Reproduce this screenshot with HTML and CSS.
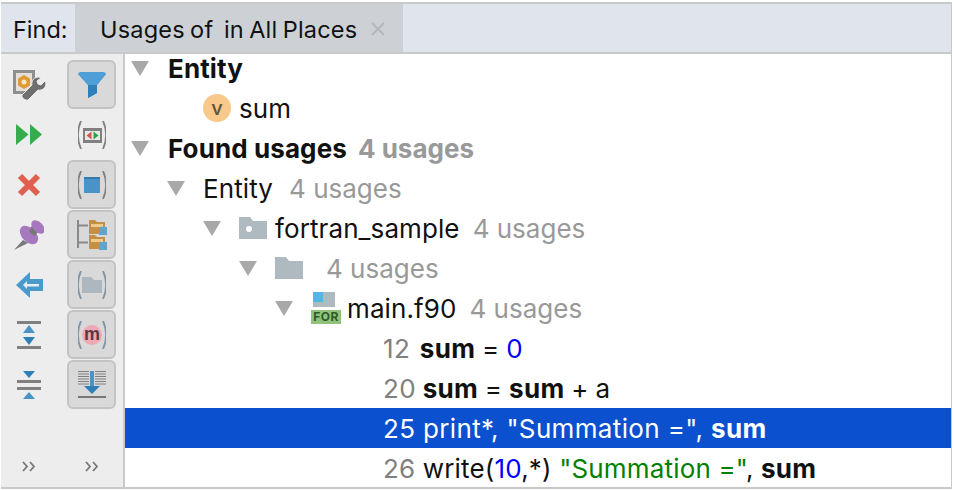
FILE: index.html
```html
<!DOCTYPE html>
<html lang="en">
<head>
<meta charset="utf-8">
<title>Find</title>
<link rel="stylesheet" href="styles.css">
</head>
<body>
<div class="panel">
  <header class="head">
    <div class="find">Find:</div>
    <div class="tab"><span class="title">Usages of&nbsp; in All Places</span>
      <svg class="close" width="14" height="14" viewBox="0 0 14 14"><path d="M1 1l12 12M13 1L1 13" stroke="#b4b8bc" stroke-width="2" fill="none"/></svg>
    </div>
  </header>
  <div class="main">
    <aside class="side">
      <div class="col">
        <div class="cell"><svg width="34" height="31" viewBox="0 0 34 31"><rect x="1" y="1" width="22" height="24" fill="#8f8f8f"/><rect x="4" y="4" width="16" height="18" fill="#e4e0d8"/><path d="M12 6l6 3.500v7L12 20l-6-3.500v-7z" fill="#e09a33"/><circle cx="12" cy="13" r="2.500" fill="#f6e7cc"/><path d="M10 26l10-10c-1-4 2-8 7-8l2 1-4 3 1 3 3 1 4-4 1 2c0 5-4 8-8 7l-10 10c-2 1-7-2-6-5z" fill="#6f6f6f" stroke="#ededed" stroke-width="1"/></svg></div>
        <div class="cell"><svg width="26" height="21" viewBox="0 0 26 21"><path d="M0 0l12.500 10.500L0 21zM14 0l12 10.500L14 21z" fill="#36ac4c"/></svg></div>
        <div class="cell"><svg width="24" height="24" viewBox="0 0 24 24"><path d="M3 3l18 18M21 3L3 21" stroke="#e0604f" stroke-width="6" fill="none"/></svg></div>
        <div class="cell"><svg width="30" height="30" viewBox="0 0 30 30"><path d="M0 30l9-10 5 3z" fill="#777"/><path d="M14 10l5-5 6 6-5 5z" fill="#777"/><ellipse cx="15" cy="15" rx="11" ry="7" fill="#a679bf" transform="rotate(45 15 15)"/><path d="M15 11l4-4 5 5-4 4z" fill="#777"/><ellipse cx="24" cy="7" rx="8" ry="5" fill="#a679bf" transform="rotate(45 24 7)"/></svg></div>
        <div class="cell"><svg width="27" height="26" viewBox="0 0 27 26"><path d="M0 13L14 0v7h13v12H14v7z" fill="#4a9bcb"/><path d="M7 13l4-4v3h12v2.500H11V17z" fill="#e6eef4"/></svg></div>
        <div class="cell"><svg width="24" height="28" viewBox="0 0 24 28"><rect width="24" height="3" fill="#808080"/><path d="M12 4l6 8H6z" fill="#4a93c4"/><path d="M12 24l6-8H6z" fill="#2e7fb5"/><rect y="25" width="24" height="3" fill="#808080"/></svg></div>
        <div class="cell"><svg width="24" height="28" viewBox="0 0 24 28"><path d="M6 0h12l-6 7z" fill="#2e7fb5"/><rect y="9" width="24" height="3" fill="#808080"/><rect y="16" width="24" height="3" fill="#808080"/><path d="M12 21l6 7H6z" fill="#4a93c4"/></svg></div>
        <div class="more">
          <svg width="14" height="11" viewBox="0 0 14 11"><path d="M1 1l4 4.500-4 4.500M8 1l4 4.500-4 4.500" stroke="#777" stroke-width="1.800" fill="none"/></svg>
        </div>
      </div>
      <div class="col col2">
        <div class="cell on"><svg width="28" height="26" viewBox="0 0 28 26"><path d="M0 2l2-2h24l2 2-9 11v8l-9 5V13z" fill="#4a9bd4"/><path d="M0 2l2-2h24l2 2-9 11h-9z" fill="#4f9ed6"/><path d="M10 13h9v8l-9 5z" fill="#2f7fb9"/></svg></div>
        <div class="cell"><svg width="28" height="28" viewBox="0 0 28 28"><path d="M3 0C-1 9-1 19 3 28M25 0c4 9 4 19 0 28" stroke="#808080" stroke-width="1.800" fill="none"/><rect x="5" y="7" width="19" height="15" fill="#808080"/><rect x="7" y="10" width="15" height="9" fill="#e8e8e8"/><path d="M13.500 10.500v8l-5-4z" fill="#d9534a"/><path d="M15.500 10.500v8l5-4z" fill="#27a844"/></svg></div>
        <div class="cell on"><svg width="28" height="28" viewBox="0 0 28 28"><path d="M3 0C-1 9-1 19 3 28M25 0c4 9 4 19 0 28" stroke="#808080" stroke-width="1.800" fill="none"/><rect x="6" y="6" width="16" height="16" fill="#4a93c9"/><rect x="6" y="6" width="16" height="2" fill="#3778a6"/></svg></div>
        <div class="cell on"><svg width="30" height="30" viewBox="0 0 30 30"><path d="M1 0v28M1 5.500h10M1 22.500h10" stroke="#8a8a8a" stroke-width="2" fill="none"/><path d="M12 0h6l2 2h8v12H12z" fill="#c48f46"/><path d="M14 4h12v3H14z" fill="#eccb90"/><path d="M12 15h6l2 2h8v12H12z" fill="#c48f46"/><path d="M14 19h12v3H14z" fill="#eccb90"/><rect x="22" y="7" width="8" height="8" fill="#5ea5cf"/><rect x="22" y="22" width="8" height="8" fill="#5ea5cf"/></svg></div>
        <div class="cell on"><svg width="28" height="28" viewBox="0 0 28 28"><path d="M3 0C-1 9-1 19 3 28M25 0c4 9 4 19 0 28" stroke="#7f93a3" stroke-width="1.800" fill="none"/><path d="M4 6h9l3 3h8v13H4z" fill="#adb7bf"/></svg></div>
        <div class="cell on"><svg width="28" height="28" viewBox="0 0 28 28"><path d="M3 0C-1 9-1 19 3 28M25 0c4 9 4 19 0 28" stroke="#7f93a3" stroke-width="1.800" fill="none"/><circle cx="14" cy="14" r="10" fill="#f0a8b5"/><text x="14" y="18.500" class="m">m</text></svg></div>
        <div class="cell on"><svg width="28" height="27" viewBox="0 0 28 27"><path d="M0 .5h11M0 3h11M0 5.500h11M0 8h11M0 10.500h11M0 13h11M17 .5h11M17 3h11M17 5.500h11M17 8h11M17 10.500h11M17 13h11" stroke="#808080" stroke-width="1.200"/><rect x="12" y="0" width="4" height="15" fill="#4a93c4"/><path d="M6 15h16l-8 8z" fill="#2e7fb5"/><rect y="25" width="28" height="2" fill="#777"/></svg></div>
        <div class="more">
          <svg width="14" height="11" viewBox="0 0 14 11"><path d="M1 1l4 4.500-4 4.500M8 1l4 4.500-4 4.500" stroke="#777" stroke-width="1.800" fill="none"/></svg>
        </div>
      </div>
    </aside>
    <section class="tree">
      <div class="row lv0 b"><i class="tri"></i><span>Entity</span></div>
      <div class="row lv-var"><span class="var">v</span><span>sum</span></div>
      <div class="row lv0 b"><i class="tri"></i><span>Found usages</span><span class="cnt">4 usages</span></div>
      <div class="row lv1"><i class="tri"></i><span>Entity</span><span class="cnt">4 usages</span></div>
      <div class="row lv2"><i class="tri"></i>
        <svg class="ic" width="28" height="22" viewBox="0 0 28 22"><path d="M0 0h11l3 4h14v18H0z" fill="#afb9c0"/><circle cx="10" cy="12" r="3" fill="#fff"/></svg>
        <span>fortran_sample</span><span class="cnt">4 usages</span></div>
      <div class="row lv3"><i class="tri"></i>
        <svg class="ic" width="28" height="22" viewBox="0 0 28 22"><path d="M0 0h11l3 4h14v18H0z" fill="#afb9c0"/></svg>
        <span class="cnt gap">4 usages</span></div>
      <div class="row lv4"><i class="tri"></i>
        <svg class="file" width="30" height="32" viewBox="0 0 30 32"><rect x="2" y="0" width="22" height="15" fill="#afb9c0"/><rect x="2" y="0" width="10" height="10" fill="#54b6e6"/><rect y="18" width="30" height="14" fill="#8fc37c"/><text x="15" y="29" class="for">FOR</text></svg>
        <span>main.f90</span><span class="cnt">4 usages</span></div>
      <div class="code assign first"><span class="ln">12</span> <b>sum</b> = <span class="num">0</span></div>
      <div class="code assign"><span class="ln">20</span> <b>sum</b> = <b>sum</b> + a</div>
      <div class="code sel"><span class="ln">25</span> print*, "Summation =", <b>sum</b></div>
      <div class="code tight"><span class="ln">26</span> write(<span class="num">10</span>,*) <span class="str">"Summation ="</span>, <b>sum</b></div>
    </section>
  </div>
</div>
</body>
</html>
```
FILE: styles.css
```css
* { box-sizing: border-box; }
html, body { margin: 0; height: 100%; background: #fff; }
body { overflow: hidden; font-family: Inter, "Liberation Sans", sans-serif; font-size: 26px; letter-spacing: .1px; color: #111; }
.panel { width: 951px; height: 487px; margin: 2px 0 0 1px; border: solid #c9c9c9; border-width: 2px 1px 2px 0; display: flex; flex-direction: column; overflow: hidden; }
.head { position: relative; z-index: 1; height: 50px; flex: none; display: flex; background: #e0e4ed; border-bottom: 2px solid #c9c9c9; font-size: 23.500px; letter-spacing: 0; }
.find { width: 74px; padding-left: 12px; line-height: 51px; }
.tab { width: 328px; background: #cdd1d6; display: flex; align-items: center; padding: 2px 0 0 25px; }
.title { letter-spacing: .2px; word-spacing: -1.500px; }
.close { margin-left: 14px; }
.main { flex: 1; display: flex; min-height: 0; }
.side { width: 124px; flex: none; display: flex; background: #ededed; border-right: 2px solid #c9c9c9; padding-top: 6px; }
.col { width: 56px; display: flex; flex-direction: column; align-items: center; }
.col2 { width: 66px; padding-left: 10px; align-items: flex-start; }
.cell { width: 49px; height: 49px; margin-bottom: 1px; flex: none; display: flex; align-items: center; justify-content: center; border: 2px solid transparent; border-radius: 6px; }
.cell.on { background: #d9d9d9; border-color: #c3c3c3; }
.more { margin-top: auto; height: 26px; display: flex; align-items: flex-start; }
.col2 .more { margin-left: 18px; }
.m { font: 700 18px "Liberation Sans", sans-serif; fill: #5c3a40; text-anchor: middle; }
.for { font: 700 12px Inter, sans-serif; fill: #2f5a2a; text-anchor: middle; letter-spacing: .5px; }
.tree { flex: 1; margin-top: -6px; min-width: 0; }
.row { height: 40px; display: flex; align-items: center; white-space: pre; }
.code { height: 40px; line-height: 42px; padding-left: 258px; white-space: pre; letter-spacing: .35px; }
.assign { word-spacing: -1px; }
.first .ln { margin-right: 3px; }
.tight { letter-spacing: .17px; }
.b { font-weight: 700; }
.tri { flex: none; width: 0; height: 0; border-left: 9px solid transparent; border-right: 9px solid transparent; border-top: 15px solid #a9a9a9; margin-right: 18px; }
.lv0 { padding-left: 6px; }
.lv0 span:first-of-type { margin-left: 1px; }
.lv1 { padding-left: 42px; }
.lv2 { padding-left: 78px; }
.lv3 { padding-left: 114px; }
.lv4 { padding-left: 150px; }
.lv-var { padding-left: 78px; }
.var { width: 28px; height: 28px; border-radius: 50%; background: #f8c98a; color: #5d5243; font-size: 20px; font-weight: 500; display: flex; align-items: center; justify-content: center; margin-right: 8px; }
.cnt { color: #999; margin-left: 13px; letter-spacing: 0; }
.b .cnt { margin-left: 11px; }
.lv1 .cnt { margin-left: 16px; }
.cnt.gap { margin-left: 15px; }
.ic { margin-right: 8px; }
.file { margin-right: 6px; }
.ln { color: #808080; }
.num { color: #0000ff; }
.str { color: #008000; }
.sel { background: #0b50cf; color: #fff; }
.sel .ln { color: #fff; }
```
